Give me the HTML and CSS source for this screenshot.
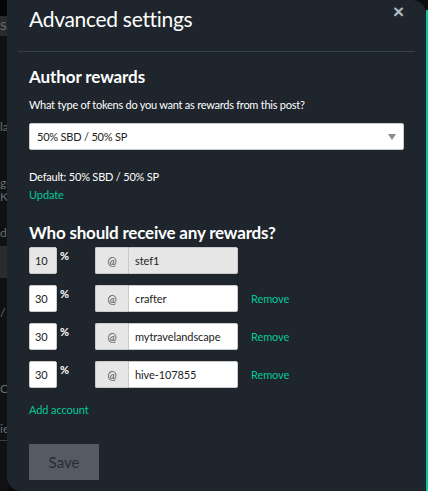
FILE: index.html
```html
<!DOCTYPE html>
<html lang="en">
<head>
    <meta charset="UTF-8">
    <meta name="viewport" content="width=device-width, initial-scale=1.0">
    <title>Advanced settings</title>
    <link rel="stylesheet" href="styles.css">
</head>
<body>
<div class="page">
    <div class="under">
        <div class="under-top"></div>
        <div class="under-bar">Sc</div>
        <div class="under-text t1">la</div>
        <div class="under-text t2">ge</div>
        <div class="under-text">K</div>
        <div class="under-text t3">dr</div>
        <div class="under-bar b2"></div>
        <div class="under-text t4">/</div>
        <div class="under-text t5">C</div>
        <div class="under-text t6">ie</div>
    </div>

    <div class="modal">
        <button class="close">&times;</button>
        <h1 class="modal-title">Advanced settings</h1>
        <hr class="sep">

        <h2 class="sec-title">Author rewards</h2>
        <p class="hint">What type of tokens do you want as rewards from this post?</p>
        <div class="select">
            <span>50% SBD / 50% SP</span>
            <span class="caret"></span>
        </div>
        <p class="default">Default: 50% SBD / 50% SP</p>
        <a class="link update">Update</a>

        <h2 class="sec-title who">Who should receive any rewards?</h2>

        <div class="rows">
            <div class="row">
                <input class="pct" value="10" disabled>
                <span class="pct-sign">%</span>
                <div class="acct">
                    <span class="at">@</span>
                    <input class="name" value="stef1" disabled>
                </div>
            </div>
            <div class="row">
                <input class="pct" value="30">
                <span class="pct-sign">%</span>
                <div class="acct">
                    <span class="at">@</span>
                    <input class="name" value="crafter">
                </div>
                <a class="link remove">Remove</a>
            </div>
            <div class="row">
                <input class="pct" value="30">
                <span class="pct-sign">%</span>
                <div class="acct">
                    <span class="at">@</span>
                    <input class="name" value="mytravelandscape">
                </div>
                <a class="link remove">Remove</a>
            </div>
            <div class="row">
                <input class="pct" value="30">
                <span class="pct-sign">%</span>
                <div class="acct">
                    <span class="at">@</span>
                    <input class="name" value="hive-107855">
                </div>
                <a class="link remove">Remove</a>
            </div>
        </div>

        <a class="link add">Add account</a>

        <button class="save">Save</button>
    </div>

    <div class="edge"></div>
</div>
</body>
</html>
```

FILE: styles.css
```css
* {
    box-sizing: border-box;
}
body {
    margin: 0;
    background-color: #0b0d0f;
    font-family: "Lato", "Noto Sans", sans-serif;
    overflow: hidden;
}
.page {
    display: flex;
    height: 491px;
}

/* page showing behind the modal */
.under {
    width: 7px;
    overflow: hidden;
    background-color: #0f1113;
    color: #6b6f73;
    font-size: 12px;
    white-space: nowrap;
}
.under-top {
    height: 16px;
    background-color: #050606;
}
.under-bar {
    height: 20px;
    background-color: #2a2b2c;
    line-height: 20px;
}
.under-text {
    line-height: 14px;
}
.t1 { margin-top: 84px; }
.t2 { margin-top: 42px; }
.t3 { margin-top: 22px; }
.b2 { margin-top: 6px; height: 32px; }
.t4 { margin-top: 28px; }
.t5 { margin-top: 62px; }
.t6 {
    margin-top: 26px;
    border-bottom: 1px solid #3b3e41;
    padding-bottom: 4px;
}

.edge {
    width: 2px;
    margin-top: 10px;
    background-color: #07c69a;
}

.modal {
    position: relative;
    flex: 1;
    background-color: #1e252c;
    border-radius: 0 14px 0 14px;
    padding: 0 22px 0 22px;
    color: #fff;
}
.close {
    position: absolute;
    top: 1px;
    right: 22px;
    background: none;
    border: none;
    color: #b4bac0;
    font-size: 19px;
    font-weight: bold;
    padding: 0;
    font-family: "Liberation Sans", sans-serif;
}
.modal-title {
    margin: 0;
    padding-top: 4px;
    font-size: 21px;
    letter-spacing: -0.3px;
    font-weight: normal;
    line-height: 30px;
}
.sep {
    margin: 17px -11px 0 -11px;
    border: none;
    border-top: 1px solid #34404b;
}
.sec-title {
    margin: 14px 0 0 0;
    font-size: 17px;
    letter-spacing: -0.1px;
    font-weight: bold;
    line-height: 22px;
}
.hint {
    margin: 9px 0 0 0;
    font-size: 11px;
    letter-spacing: -0.25px;
    line-height: 16px;
}
.select {
    display: flex;
    justify-content: space-between;
    align-items: center;
    margin-top: 10px;
    height: 27px;
    background-color: #fff;
    border: 1px solid #cacaca;
    border-radius: 2px;
    padding: 0 7px;
    color: #222;
    font-size: 11px;
    letter-spacing: -0.2px;
}
.caret {
    width: 0;
    height: 0;
    border-left: 4px solid transparent;
    border-right: 4px solid transparent;
    border-top: 6px solid #8a8a8a;
}
.default {
    margin: 19px 0 0 0;
    font-size: 11px;
    letter-spacing: -0.2px;
    line-height: 16px;
}
.link {
    display: block;
    color: #07c69a;
    font-size: 11px;
    letter-spacing: -0.1px;
    line-height: 16px;
    cursor: pointer;
}
.update {
    margin-top: 2px;
}
.who {
    margin-top: 19px;
    letter-spacing: -0.2px;
}
.rows {
    display: flex;
    flex-direction: column;
    gap: 11px;
    margin-top: 3px;
}
.row {
    display: flex;
    align-items: center;
    height: 27px;
}
input {
    font-family: inherit;
    font-size: 11px;
    letter-spacing: -0.1px;
    color: #222;
    height: 27px;
    border: 1px solid #cacaca;
    border-radius: 2px;
    background-color: #fff;
    padding: 0 6px;
    outline: none;
}
input:disabled {
    background-color: #e6e6e6;
    color: #222;
}
.pct {
    width: 28px;
    padding: 0 5px;
}
.pct-sign {
    align-self: flex-start;
    margin-left: 3px;
    width: 35px;
    font-size: 11px;
    font-weight: bold;
    line-height: 18px;
}
.acct {
    display: flex;
    width: 143px;
}
.at {
    display: flex;
    align-items: center;
    justify-content: center;
    width: 33px;
    height: 27px;
    background-color: #e6e6e6;
    border: 1px solid #cacaca;
    border-right: none;
    border-radius: 2px 0 0 2px;
    color: #444;
    font-size: 11px;
}
.name {
    width: 110px;
    border-radius: 0 2px 2px 0;
}
.remove {
    margin-left: 13px;
}
.add {
    margin-top: 14px;
}
.save {
    display: block;
    margin-top: 26px;
    width: 70px;
    height: 36px;
    background-color: #545b63;
    border: none;
    color: #262c33;
    font-family: inherit;
    font-size: 15px;
}
```
